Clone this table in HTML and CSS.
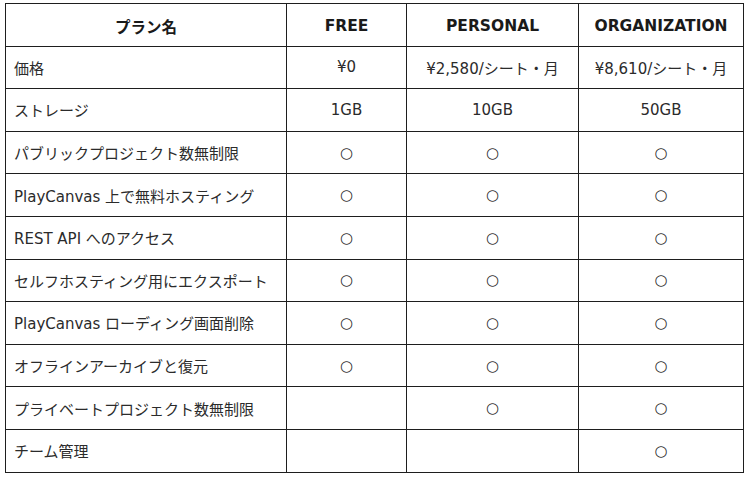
FILE: index.html
```html
<!DOCTYPE html>
<html lang="ja">
<head>
<meta charset="utf-8">
<link rel="stylesheet" href="styles.css">
</head>
<body>
<table class="plans">
  <colgroup>
    <col class="c-name"><col class="c-free"><col class="c-personal"><col class="c-org">
  </colgroup>
  <thead>
    <tr><th>プラン名</th><th>FREE</th><th>PERSONAL</th><th>ORGANIZATION</th></tr>
  </thead>
  <tbody>
    <tr><td>価格</td><td>¥0</td><td>¥2,580/シート・月</td><td>¥8,610/シート・月</td></tr>
    <tr><td>ストレージ</td><td>1GB</td><td>10GB</td><td>50GB</td></tr>
    <tr><td>パブリックプロジェクト数無制限</td><td>○</td><td>○</td><td>○</td></tr>
    <tr><td>PlayCanvas 上で無料ホスティング</td><td>○</td><td>○</td><td>○</td></tr>
    <tr><td>REST API へのアクセス</td><td>○</td><td>○</td><td>○</td></tr>
    <tr><td>セルフホスティング用にエクスポート</td><td>○</td><td>○</td><td>○</td></tr>
    <tr><td>PlayCanvas ローディング画面削除</td><td>○</td><td>○</td><td>○</td></tr>
    <tr><td>オフラインアーカイブと復元</td><td>○</td><td>○</td><td>○</td></tr>
    <tr><td>プライベートプロジェクト数無制限</td><td></td><td>○</td><td>○</td></tr>
    <tr><td>チーム管理</td><td></td><td></td><td>○</td></tr>
  </tbody>
</table>
</body>
</html>
```
FILE: styles.css
```css
html, body {
  margin: 0;
  padding: 0;
  background: #fff;
}
body {
  padding: 3px 0 0 5px;
  font-family: "DejaVu Sans", "Noto Sans CJK JP", sans-serif;
  color: #2b2b2b;
}
.plans {
  border-collapse: collapse;
  table-layout: fixed;
  width: 738px;
  font-size: 15px;
}
.c-name { width: 281px; }
.c-free { width: 120px; }
.c-personal { width: 172px; }
.c-org { width: 165px; }
.plans th, .plans td {
  border: 1px solid #1e1e1e;
  height: 41.6px;
  padding: 0;
  text-align: center;
  white-space: nowrap;
  overflow: hidden;
}
.plans th {
  font-weight: bold;
  font-size: 15.5px;
  color: #1a1a1a;
  height: 39.6px;
  padding-top: 2px;
}
.plans td:first-child {
  text-align: left;
  padding-left: 8px;
}
```
